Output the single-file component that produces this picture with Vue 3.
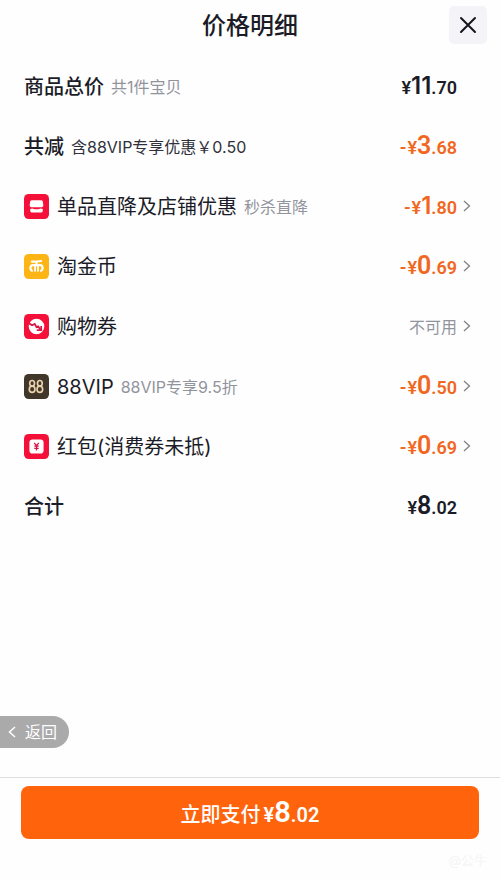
<script setup>
const rows = [
  { id: 'total', label: '商品总价', note: '共1件宝贝', strong: true, int: '11', dec: '.70' },
  { id: 'saved', label: '共减', note: '含88VIP专享优惠￥0.50', strong: true, darkNote: true, minus: true, int: '3', dec: '.68' },
  { id: 'shop', icon: 'shop', label: '单品直降及店铺优惠', note: '秒杀直降', minus: true, int: '1', dec: '.80', link: true },
  { id: 'coin', icon: 'coin', label: '淘金币', minus: true, int: '0', dec: '.69', link: true },
  { id: 'coupon', icon: 'coupon', label: '购物券', status: '不可用', link: true },
  { id: 'vip', icon: 'vip', label: '88VIP', note: '88VIP专享9.5折', minus: true, int: '0', dec: '.50', link: true },
  { id: 'packet', icon: 'packet', label: '红包(消费券未抵)', minus: true, int: '0', dec: '.69', link: true },
  { id: 'sum', label: '合计', strong: true, int: '8', dec: '.02' },
]

// Ones take the face with the narrower figure.
const isOnes = (int) => /^1+$/.test(int)
</script>

<template>
  <div class="page">
    <header class="header">
      <h1 class="title">价格明细</h1>
      <button class="close" type="button" aria-label="关闭">
        <svg width="18" height="18" viewBox="0 0 18 18" fill="none" stroke="#14151f" stroke-width="2" stroke-linecap="round">
          <path d="M2 2 L16 16 M16 2 L2 16" />
        </svg>
      </button>
    </header>

    <main class="main">
      <ul class="list">
        <li v-for="row in rows" :key="row.id">
          <component :is="row.link ? 'button' : 'div'" class="row" :type="row.link ? 'button' : null">
            <svg v-if="row.icon" class="icon" viewBox="0 0 24 24" aria-hidden="true">
              <template v-if="row.icon === 'shop'">
                <rect width="24" height="24" rx="4.5" fill="#f5103a" />
                <path d="M7.500 6 H16.500 Q17.800 6 18 7.300 L18.600 10.800 Q18.600 12.800 17 12.800 H7 Q5.400 12.800 5.400 10.800 L6 7.300 Q6.200 6 7.500 6Z" fill="#fff" />
                <path d="M6 14.300 Q8 13.600 9.500 14.300 Q12 15 14.500 14.300 Q16 13.600 18 14.300 V16 Q18 17.800 16.300 17.800 H7.700 Q6 17.800 6 16Z" fill="#fff" />
              </template>
              <template v-else-if="row.icon === 'coin'">
                <rect width="24" height="24" rx="4.5" fill="#fdb515" />
                <g fill="none" stroke="#fff" stroke-linecap="round" stroke-linejoin="round">
                  <path d="M7.500 7.300 Q12 7.500 16.500 6.800" stroke-width="2" />
                  <path d="M7.600 16 C5.500 15 5.700 10.700 8.600 10.700 H15.400 C18.300 10.700 18.500 15 16.400 16" stroke-width="2.200" />
                  <path d="M12 8 V10.700" stroke-width="2" />
                  <path d="M10.600 11.500 V16.300 M13.400 11.500 V16.300" stroke-width="1.700" />
                </g>
              </template>
              <template v-else-if="row.icon === 'coupon'">
                <rect width="24" height="24" rx="4.5" fill="#f5103a" />
                <circle cx="12" cy="12" r="7.500" fill="#fff" />
                <path d="M4.800 9 L7.800 10.800 L10.300 9.500 L12 12.600 L13.600 11.900 L15.700 14.800" fill="none" stroke="#d91549" stroke-width="1.700" />
                <path d="M16.500 11.500 V15.400 H12.300" fill="none" stroke="#d91549" stroke-width="1.700" />
              </template>
              <template v-else-if="row.icon === 'vip'">
                <rect width="24" height="24" rx="4.5" fill="#41362a" />
                <g fill="none" stroke="#ead2ac" stroke-width="1.600">
                  <ellipse cx="7.800" cy="8.900" rx="2.300" ry="2.700" />
                  <ellipse cx="7.800" cy="14.700" rx="2.700" ry="3" />
                  <ellipse cx="15.200" cy="8.900" rx="2.300" ry="2.700" />
                  <ellipse cx="15.200" cy="14.700" rx="2.700" ry="3" />
                </g>
              </template>
              <template v-else>
                <rect width="24" height="24" rx="4.5" fill="#f5103a" />
                <rect x="5.200" y="5.200" width="13.600" height="13.600" rx="3" fill="#fff" />
                <path d="M9.800 8.500 L12 11.200 L14.200 8.500 M12 11.200 V15.800 M9.900 11.700 H14.100 M9.900 13.700 H14.100" fill="none" stroke="#d91549" stroke-width="1.200" />
              </template>
            </svg>
            <span class="label" :class="{ strong: row.strong }">{{ row.label }}</span>
            <span v-if="row.note" class="note" :class="{ dark: row.darkNote }">{{ row.note }}</span>
            <span class="value">
              <span v-if="row.status" class="status">{{ row.status }}</span>
              <span v-else class="price" :class="{ minus: row.minus }"><span v-if="row.minus" class="sign">-</span>¥<span class="int" :class="{ ones: isOnes(row.int) }">{{ row.int }}</span>{{ row.dec }}</span>
            </span>
            <svg v-if="row.link" class="arrow" width="8" height="12" viewBox="0 0 8 12" fill="none" stroke="#85868c" stroke-width="1.400" aria-hidden="true">
              <path d="M1 1 L6.500 6 L1 11" />
            </svg>
          </component>
        </li>
      </ul>
      <button class="back" type="button">
        <svg width="8" height="12" viewBox="0 0 8 12" fill="none" stroke="#fff" stroke-width="1.500" aria-hidden="true">
          <path d="M7 1 L1.500 6 L7 11" />
        </svg>
        返回
      </button>
    </main>

    <footer class="footer">
      <button class="pay" type="button">
        <span>立即支付</span>
        <span class="price pay-price">¥<span class="int">8</span>.02</span>
      </button>
      <span class="mark">@公牛</span>
    </footer>
  </div>
</template>

<style>
body {
  margin: 0;
  background: #fefefe;
}
</style>

<style scoped>
.page {
  box-sizing: border-box;
  display: flex;
  flex-direction: column;
  min-height: 100vh;
  background: #fefefe;
  color: #1b1c27;
  font-family: Inter, "Noto Sans CJK SC", sans-serif;
}

button {
  margin: 0;
  padding: 0;
  border: 0;
  background: none;
  color: inherit;
  font: inherit;
  text-align: left;
  cursor: pointer;
}

.header {
  display: grid;
  grid-template-columns: 1fr auto 1fr;
  align-items: center;
  padding: 6px 13px 12px;
}

.title {
  grid-column: 2;
  margin: 0;
  padding-top: 2px;
  font-size: 24px;
  font-weight: 500;
  line-height: 36px;
}

.close {
  display: flex;
  align-items: center;
  justify-content: center;
  justify-self: end;
  width: 38px;
  height: 38px;
  border-radius: 5px;
  background: #f4f4f8;
}

.main {
  display: flex;
  flex: 1;
  flex-direction: column;
  justify-content: space-between;
  padding-bottom: 29px;
}

.list {
  margin: 0;
  padding: 0 24px;
  list-style: none;
}

.row {
  display: flex;
  align-items: center;
  width: 100%;
  height: 60px;
}

.icon {
  flex: none;
  width: 25px;
  height: 25px;
  margin-right: 8px;
}

.label,
.note,
.value {
  padding-top: 2px;
}

.label {
  font-size: 20px;
  line-height: 30px;
  white-space: nowrap;
}

.strong {
  font-weight: 500;
}

.note {
  margin-left: 7px;
  color: #92949d;
  font-size: 16px;
  line-height: 24px;
  white-space: nowrap;
}

.dark {
  color: #30313a;
}

.value {
  width: 0;
  flex: 1;
  display: flex;
  justify-content: flex-end;
  padding-right: 19px;
  white-space: nowrap;
}

.arrow {
  flex: none;
  margin: 0 5px 0 -13px;
}

.status {
  color: #92949d;
  font-size: 16px;
  line-height: 24px;
}

.price {
  font-family: Roboto, "Noto Sans CJK SC", sans-serif;
  font-size: 18px;
  font-weight: 600;
  line-height: 30px;
}

.minus {
  color: #f2671f;
}

.sign {
  margin-right: 1px;
}

.int {
  font-size: 25px;
}

.ones {
  font-family: Inter, sans-serif;
  font-size: 24px;
}

.back {
  display: flex;
  align-items: center;
  align-self: flex-start;
  gap: 9px;
  padding: 0 12px 0 8px;
  border-radius: 0 16px 16px 0;
  background: #aaa;
  color: #fff;
  font-size: 16px;
  line-height: 32px;
}

.footer {
  display: flex;
  flex-direction: column;
  padding: 8px 21px 10px;
  border-top: 1px solid #dedede;
}

.pay {
  display: flex;
  align-items: baseline;
  justify-content: center;
  gap: 3px;
  padding: 8px 0 6px;
  border-radius: 8px;
  background: #ff640d;
  color: #fff;
  font-size: 20px;
  font-weight: 500;
  line-height: 36px;
}

.pay-price {
  font-size: 20px;
  line-height: 36px;
}

.pay-price .int {
  font-size: 29px;
}

.mark {
  align-self: flex-end;
  margin-top: 12px;
  margin-right: -8px;
  color: #f5f5f5;
  font-size: 13px;
  line-height: 18px;
}
</style>
